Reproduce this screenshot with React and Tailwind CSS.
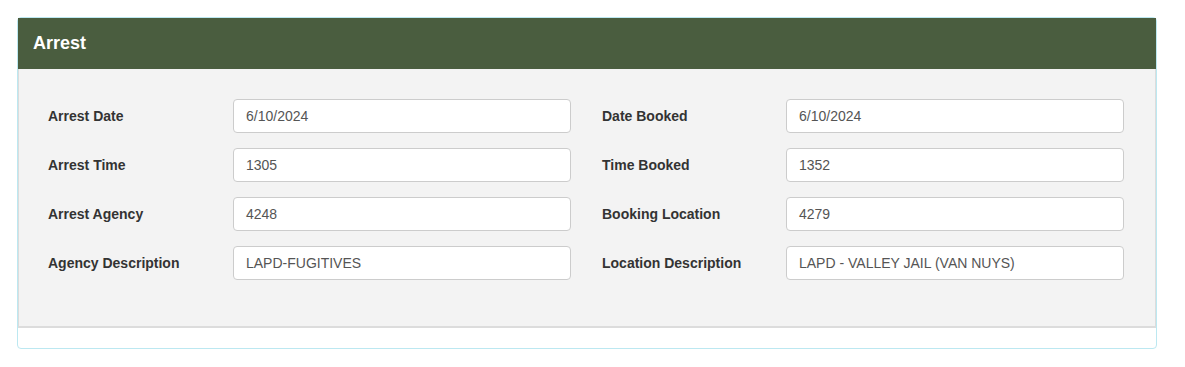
const LEFT = [
  ['Arrest Date', '6/10/2024'],
  ['Arrest Time', '1305'],
  ['Arrest Agency', '4248'],
  ['Agency Description', 'LAPD-FUGITIVES'],
];

const RIGHT = [
  ['Date Booked', '6/10/2024'],
  ['Time Booked', '1352'],
  ['Booking Location', '4279'],
  ['Location Description', 'LAPD - VALLEY JAIL (VAN NUYS)'],
];

function Field({ label, value, labelClass }) {
  return (
    <div className="flex items-center h-[34px]">
      <label className={`${labelClass} shrink-0 text-[14px] font-bold text-[#333]`}>{label}</label>
      <div className="flex-1 h-[34px] flex items-center px-[12px] bg-white border border-[#ccc] rounded-[4px] text-[14px] text-[#555]">
        {value}
      </div>
    </div>
  );
}

export default function App() {
  return (
    <div className="w-[1185px] h-[367px] bg-white pt-[17px] pl-[17px]" style={{ fontFamily: '"Liberation Sans", Arial, sans-serif' }}>
      <div className="w-[1140px] h-[332px] border border-[#bce8f1] rounded-[4px] flex flex-col">
        <div className="border-x border-b-2 border-[#dcdcdc]">
          {/* Header */}
          <div className="h-[51px] bg-[#4a5d3f] flex items-center pl-[15px] -mx-px">
            <h2 className="text-white font-bold text-[18px]">Arrest</h2>
          </div>
          {/* Body */}
          <div className="bg-[#f3f3f3] pt-[30px] pb-[46px] pl-[29px] grid grid-cols-[523px_522px] gap-x-[31px] gap-y-[15px]">
            {LEFT.map((l, i) => (
              <div key={i} className="contents">
                <Field label={l[0]} value={l[1]} labelClass="w-[185px]" />
                <Field label={RIGHT[i][0]} value={RIGHT[i][1]} labelClass="w-[184px]" />
              </div>
            ))}
          </div>
        </div>
      </div>
    </div>
  );
}
